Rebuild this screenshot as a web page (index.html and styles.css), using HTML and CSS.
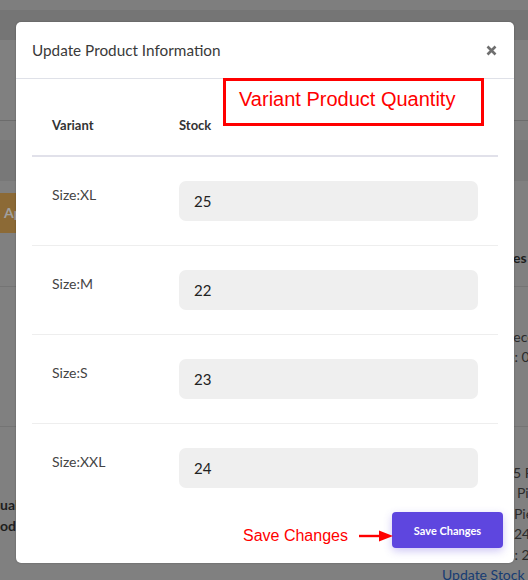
FILE: index.html
```html
<!DOCTYPE html>
<html>
<head>
<meta charset="utf-8">
<link rel="stylesheet" href="styles.css">
</head>
<body>
<div class="page">
  <div class="bg-top"></div>
  <div class="bg-nav"></div>
  <div class="bg-sec"></div>
  <div class="bg-gap"></div>
  <div class="bg-thead"></div>
  <div class="bg-row bg-row1">
    <div class="bg-left"><div class="bg-btn">Apply</div></div>
    <div class="bg-right r1"><span class="bold">Quantities</span></div>
  </div>
  <div class="bg-row bg-row2">
    <div class="bg-left"></div>
    <div class="bg-right r2">
      <span class="s-a">Received</span>
      <span class="s-b">e: 0</span>
      <span class="link s-c">Stock</span>
    </div>
  </div>
  <div class="bg-row bg-row3">
    <div class="bg-left l3">
      <span class="bold">ual Stock</span>
      <span class="bold">odi Items</span>
    </div>
    <div class="bg-right r3">
      <span class="s-a">25 Pieces</span>
      <span class="s-d">Pieces</span>
      <span class="s-e">Pieces</span>
      <span class="s-e">24</span>
      <span class="s-b">e: 2</span>
      <span class="link s-f">Update Stock</span>
    </div>
  </div>
</div>

<div class="modal">
  <div class="modal-header">
    <h5 class="modal-title">Update Product Information</h5>
    <button class="close" aria-label="Close">
      <svg width="11" height="11" viewBox="0 0 11 11"><path d="M1.5 1.5 L9.5 9.5 M9.5 1.5 L1.5 9.5" stroke="#6f6f6f" stroke-width="2.6" stroke-linecap="butt"/></svg>
    </button>
  </div>
  <div class="modal-body">
    <table class="variants">
      <thead>
        <tr><th class="c-var">Variant</th><th class="c-stock">Stock</th></tr>
      </thead>
      <tbody>
        <tr><td class="label">Size:XL</td><td><div class="input">25</div></td></tr>
        <tr><td class="label">Size:M</td><td><div class="input">22</div></td></tr>
        <tr><td class="label">Size:S</td><td><div class="input">23</div></td></tr>
        <tr><td class="label">Size:XXL</td><td><div class="input">24</div></td></tr>
      </tbody>
    </table>
  </div>
  <div class="modal-footer">
    <button class="btn-save">Save Changes</button>
  </div>
</div>

<div class="note-box">Variant Product Quantity</div>
<div class="note-save">
  <span>Save Changes</span>
  <svg width="36" height="12" viewBox="0 0 36 12"><path d="M0 6 H22" stroke="#ff0000" stroke-width="2.4"/><path d="M20 0.5 L34 6 L20 11.5 Z" fill="#ff0000"/></svg>
</div>
</body>
</html>
```

FILE: styles.css
```css
html, body {
  margin: 0;
  padding: 0;
}
body {
  width: 528px;
  height: 580px;
  overflow: hidden;
  background: #808080;
  font-family: Lato, "Open Sans", sans-serif;
  position: relative;
}
.page {
  display: flex;
  flex-direction: column;
}
.bg-top { height: 10px; background: #7e7e7e; }
.bg-nav { height: 30px; background: #757575; }
.bg-sec { height: 80px; background: #808080; border-bottom: 1px solid #6c6c6c; }
.bg-gap { height: 19px; background: #7f7f7f; }
.bg-thead { height: 41px; background: #787878; }
.bg-row {
  display: flex;
  justify-content: space-between;
  border-bottom: 1px solid #747474;
  font-size: 14px;
  color: #2b2b2b;
}
.bg-row1 { height: 105px; }
.bg-row2 { height: 139px; }
.bg-row3 { height: 160px; border-bottom: none; }
.bg-left { display: flex; flex-direction: column; }
.bg-btn {
  margin-top: 12px;
  height: 40px;
  width: 60px;
  background: #8c6a36;
  color: #a0a0a0;
  font-weight: bold;
  font-size: 14px;
  line-height: 40px;
  padding-left: 4px;
  box-sizing: border-box;
}
.bg-right {
  width: 24px;
  display: flex;
  flex-direction: column;
  line-height: 20.4px;
  white-space: nowrap;
}
.r1 { padding-top: 67px; }
.r1 .bold { margin-left: -43px; }
.r2 { padding-top: 40px; }
.r3 { padding-top: 36px; }
.s-a { margin-left: 1px; }
.s-b { margin-left: 3px; }
.s-c { margin-left: -25px; }
.s-d { margin-left: 13px; }
.s-e { margin-left: 10px; }
.s-f { margin-left: -62px; }
.l3 { padding-top: 67px; line-height: 21px; }
.bold { font-weight: bold; color: #1e1e1e; }
.link { color: #173c73; }

/* modal */
.modal {
  position: absolute;
  left: 16px;
  top: 22px;
  width: 498px;
  height: 541px;
  background: #fff;
  border-radius: 5px;
  box-shadow: 0 0 2px rgba(0,0,0,0.3);
  display: flex;
  flex-direction: column;
  color: #333;
}
.modal-header {
  height: 57px;
  box-sizing: border-box;
  border-bottom: 1px solid #dfe1e8;
  display: flex;
  align-items: center;
  justify-content: space-between;
  padding: 0 16px;
}
.modal-title {
  margin: 0;
  font-weight: normal;
  font-size: 15.3px;
  color: #3a3a3a;
}
.close {
  border: 0;
  background: none;
  padding: 0;
  margin-right: 1px;
  display: flex;
}
.modal-body {
  padding: 0 16px;
  flex: 1;
}
.variants {
  width: 466px;
  border-collapse: collapse;
}
.variants th {
  text-align: left;
  font-size: 13px;
  font-weight: bold;
  color: #333;
  padding: 39px 20px 23px 20px;
  line-height: 14px;
  border-bottom: 2px solid #e1e1ea;
  height: 14px;
}
.variants th.c-var { width: 87px; }
.variants td {
  padding: 24px 20px 24px 20px;
  vertical-align: top;
  border-bottom: 1px solid #eeeeee;
}
.variants tbody tr:last-child td { border-bottom: none; }
.variants td.label {
  font-size: 14px;
  color: #444;
  padding-top: 30px;
  line-height: 16px;
}
.input {
  height: 40px;
  background: #efefef;
  border-radius: 7px;
  font-size: 15px;
  line-height: 40px;
  padding-left: 15px;
  color: #222;
}
.modal-footer {
  display: flex;
  justify-content: flex-end;
  padding: 0 11px 15px 0;
}
.btn-save {
  width: 111px;
  height: 36px;
  border: 0;
  border-radius: 4px;
  background: #5e46df;
  color: #fff;
  font-family: Lato, "Open Sans", sans-serif;
  font-weight: bold;
  font-size: 11px;
  box-shadow: 0 3px 8px rgba(94,70,223,0.3);
  padding: 0;
}

/* annotations */
.note-box {
  position: absolute;
  left: 223px;
  top: 78px;
  width: 261px;
  height: 48px;
  box-sizing: border-box;
  border: 3px solid #ff0000;
  color: #ff0000;
  font-family: "Liberation Sans", Arial, sans-serif;
  font-size: 20px;
  padding: 7px 0 0 13px;
  line-height: 22px;
  background: #fff;
}
.note-save {
  position: absolute;
  left: 243px;
  top: 526px;
  display: flex;
  align-items: center;
  gap: 11px;
  color: #ff0000;
  font-family: "Liberation Sans", Arial, sans-serif;
  font-size: 16px;
  line-height: 20px;
}
.note-save svg { display: block; }
```
